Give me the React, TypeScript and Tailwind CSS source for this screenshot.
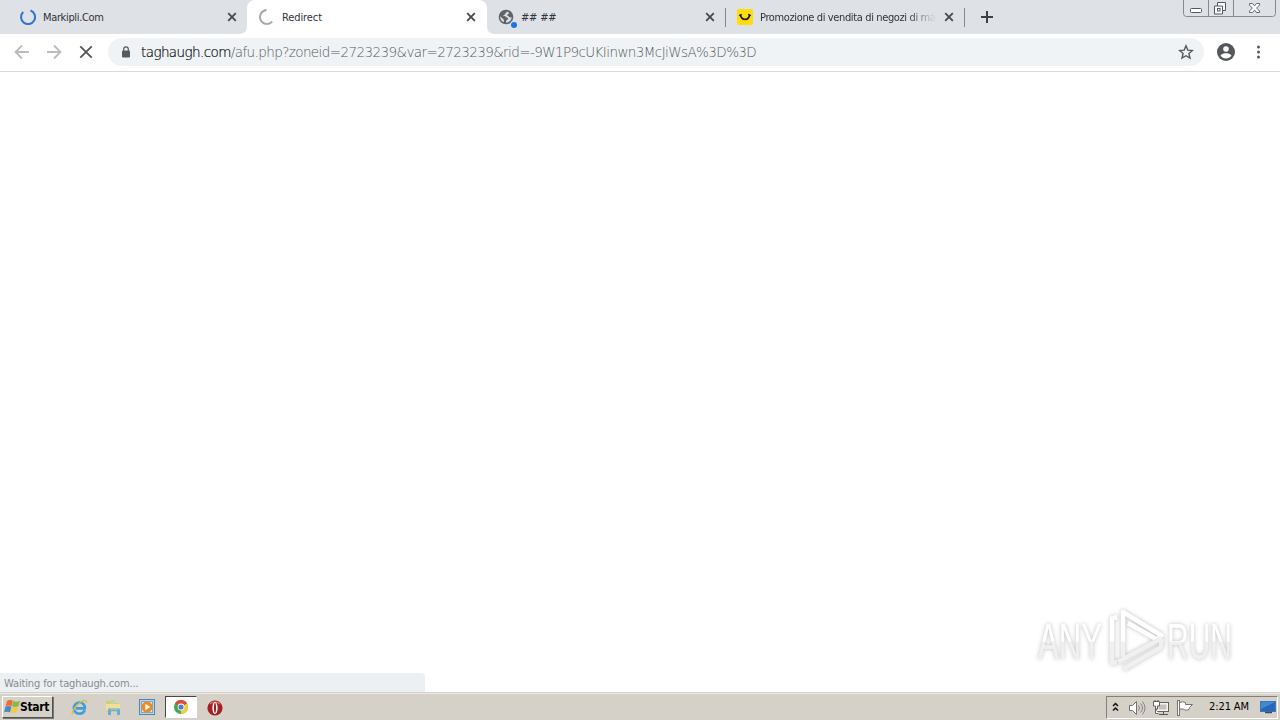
import React from 'react';
import clsx from 'clsx';

interface TabProps {
  title: string;
  icon: React.ReactNode;
  className: string;
  titleClass?: string;
}

const CloseIcon = () => (
  <svg width="10" height="10" viewBox="0 0 10 10" stroke="#45494e" strokeWidth="1.8">
    <path d="M1.2 1.2l7.6 7.6M8.8 1.2L1.2 8.8" />
  </svg>
);

const Tab = ({ title, icon, className, titleClass }: TabProps) => (
  <div className={clsx('relative flex h-[34px] shrink-0 items-center', className)}>
    <div className="h-4 w-4 shrink-0">{icon}</div>
    <div className={clsx('ml-[7px] flex-1 overflow-hidden whitespace-nowrap pt-px text-[11px] leading-[17px] text-[#303338]', titleClass)}>
      {title}
    </div>
    <div className="ml-2 shrink-0">
      <CloseIcon />
    </div>
  </div>
);

// Loading spinners
const BlueSpinner = () => (
  <svg width="16" height="16" viewBox="0 0 16 16" fill="none" stroke="#2f74d0" strokeWidth="2">
    <path d="M10.5 1.5A7 7 0 1 1 3.2 3" />
  </svg>
);

const GreySpinner = () => (
  <svg width="16" height="16" viewBox="0 0 16 16" fill="none" stroke="#a5a7aa" strokeWidth="1.9">
    <path d="M7.5 1A7 7 0 1 0 13.2 12.7" />
  </svg>
);

const GlobeIcon = () => (
  <svg width="20" height="20" viewBox="0 0 20 20">
    <circle cx="8" cy="8" r="7.3" fill="#5f6368" />
    <path d="M9.200 2.400C8.800 4 7 3.400 7 5.200c0 .8-1.800.5-1.700 1.500.1.900 2.500.1 2.900 1.200.4 1 1.900.4 2 1.500 0 1.300-1.800 1-2 2.300l-.3 2c3.300 0 5.800-2.500 5.800-5.700-.7.500-2 .7-2.600-.3-.5-.900-1.800-.5-1.900-1.600-.1-1 1.400-.8 1.700-1.700.2-.6-.7-1.700-1.700-2z" fill="#d9dce1" />
    <path d="M2.200 7.300l3.700 3.400v2.600a5.900 5.900 0 0 1-3.700-6z" fill="#d9dce1" />
    <circle cx="16" cy="16" r="4" fill="#dee1e6" />
    <circle cx="16" cy="16" r="3" fill="#1a73e8" />
  </svg>
);

const SmileIcon = () => (
  <svg width="16" height="16" viewBox="0 0 16 16">
    <rect width="16" height="16" rx="2" fill="#ffdc0a" />
    <path d="M3.5 5.800c.5 3 2.400 4.500 4.600 4.500s4-1.500 4.500-4.500" fill="none" stroke="#1d1a0e" strokeWidth="1.8" />
    <path d="M2 6.500l2.700-1.300M11.100 5.200l2.900 1.300" stroke="#1d1a0e" strokeWidth="1.2" />
  </svg>
);

const WindowButtons = () => (
  <svg className="absolute left-[1183px] top-0" width="93" height="17" viewBox="0 0 93 17" fill="none">
    <path d="M.5 0v13.5q0 3 3 3h86q3 0 3-3V0M25.5 0v16M50.5 0v16" stroke="#868991" />
    <rect x="7.5" y="8.5" width="11" height="4" rx="1" fill="#fff" stroke="#555960" />
    <path d="M34.5 2.5h8v8h-3v3.5h-8V6h3z" fill="#fff" stroke="#555960" />
    <path d="M34.5 6h5v4.5" stroke="#555960" />
    <rect x="34.5" y="8.5" width="2.5" height="2.5" stroke="#555960" />
    <path d="M66.5 3.5h3l2 2.4 2-2.4h3v1.6L73.6 8l2.9 3v1.5h-3l-2-2.4-2 2.4h-3V11l2.900-3-2.900-2.900z" fill="#fff" stroke="#666a71" />
  </svg>
);

const TabStrip = () => (
  <div className="relative flex h-[34px] bg-[#dee1e6]">
    <Tab title="Markipli.Com" icon={<BlueSpinner />} className="w-[247px] pl-5 pr-[10px]" titleClass="tracking-[-0.35px]" />
    <Tab
      title="Redirect"
      icon={<GreySpinner />}
      className="w-[240px] rounded-t-lg bg-white pl-3 pr-[11px]"
      titleClass="tracking-[-0.1px]"
    />
    <Tab title="## ##" icon={<GlobeIcon />} className="w-[239px] pl-[11px] pr-[11px]" titleClass="tracking-[-0.2px]" />
    <Tab
      title="Promozione di vendita di negozi di ma"
      icon={<SmileIcon />}
      className="w-[239px] pl-[11px] pr-[11px]"
      titleClass="tracking-[-0.37px] [mask-image:linear-gradient(to_right,#000_84%,transparent)]"
    />
    <div className="absolute left-[725px] top-[8px] h-[19px] w-px bg-[#85898f]" />
    <div className="absolute left-[964px] top-[8px] h-[19px] w-px bg-[#85898f]" />
    {/* bottom curves of the active tab */}
    <svg className="absolute left-[239px] top-[26px]" width="256" height="8" fill="#fff">
      <path d="M8 0v8H0q8 0 8-8zM248 0v8h8q-8 0-8-8z" />
    </svg>
    <svg className="ml-4 mt-[11px]" width="12" height="12" stroke="#3c4043" strokeWidth="2">
      <path d="M6 0v12M0 6h12" />
    </svg>
    <WindowButtons />
  </div>
);

const Toolbar = () => (
  <div className="flex h-[38px] items-center border-b border-[#d9dbde] bg-white pb-px pl-[14px]">
    <svg className="shrink-0" width="80" height="16" viewBox="0 0 80 16" fill="none" strokeWidth="1.8">
      <path d="M15 8H2M8 1.5L1.5 8 8 14.5M33 8h13M40 1.5L46.500 8 40 14.500" stroke="#babcbe" />
      <path d="M66.300 2.300l11.400 11.400M77.700 2.300L66.300 13.700" stroke="#505357" />
    </svg>
    <div className="ml-[14px] flex h-7 w-[1096px] shrink-0 items-center rounded-full bg-[#f0f3f5] pl-[14px] pr-[10px]">
      <svg width="8" height="12" viewBox="0 0 8 12">
        <rect y="4.500" width="8" height="7" rx="1" fill="#55595e" />
        <path d="M1.700 5V3.200a2.300 2.300 0 0 1 4.600 0V5" fill="none" stroke="#55595e" strokeWidth="1.200" />
      </svg>
      <div className="ml-[11px] flex-1 whitespace-nowrap font-['DejaVu_Sans_Light','DejaVu_Sans',sans-serif] text-[13.500px] font-extralight leading-5 tracking-[-0.590px] text-[#555a60]">
        <span className="text-black [-webkit-text-stroke:0.2px_#202124]">taghaugh.com</span>
        /afu.php?zoneid=2723239&amp;var=2723239&amp;rid=-9W1P9cUKIinwn3McJiWsA%3D%3D
      </div>
      <svg width="16" height="16" viewBox="0 0 16 16" fill="none" stroke="#55595e" strokeWidth="1.400">
        <path d="M8 1.800l1.800 4.300 4.600.4-3.500 3 1.100 4.600L8 11.700l-4 2.400 1.100-4.600-3.500-3 4.600-.4z" />
      </svg>
    </div>
    <svg className="ml-[13px] shrink-0" width="18" height="18" viewBox="0 0 18 18">
      <circle cx="9" cy="9" r="9" fill="#54585c" />
      <circle cx="9" cy="6" r="2.800" fill="#fff" />
      <path d="M3.500 12.500c1-1.700 3.500-2.200 5.500-2.200s4.500.5 5.500 2.200a6.600 6.600 0 0 1-11 0z" fill="#fff" />
    </svg>
    <svg className="ml-[21px] shrink-0" width="4" height="14" fill="#55595e">
      <circle cx="2.500" cy="2" r="1.500" />
      <circle cx="2.500" cy="7" r="1.500" />
      <circle cx="2.500" cy="12" r="1.500" />
    </svg>
  </div>
);

const Watermark = () => (
  <svg className="absolute left-[1020px] top-[600px] drop-shadow-[0_0_2px_rgba(0,0,0,0.26)]" width="240" height="84" viewBox="0 0 240 84">
    <defs>
      <linearGradient id="mark" gradientUnits="userSpaceOnUse" x1="0" y1="10" x2="0" y2="72">
        <stop offset=".5" stopColor="#fff" />
        <stop offset=".52" stopColor="#f0f0f0" />
      </linearGradient>
    </defs>
    <g fill="url(#mark)" className="font-['Liberation_Sans_Narrow','Liberation_Sans',sans-serif] text-[50px] tracking-normal">
      <text x="18" y="59" textLength="64" lengthAdjust="spacingAndGlyphs">ANY</text>
      <text x="147" y="59" textLength="65" lengthAdjust="spacingAndGlyphs">RUN</text>
    </g>
    <g fill="none" stroke="url(#mark)" strokeWidth="4.5" strokeLinejoin="round">
      <path d="M97 17l-5 1.500v44.500l5-1" />
      <path d="M103 57V12l38.500 23.500-4.500 4-29-16.500" />
      <path d="M98 62l44-24M103.500 69l37-21.500 1.500-9" stroke="#f0f0f0" />
    </g>
  </svg>
);

const StartFlag = () => (
  <svg width="17" height="16" viewBox="0 0 17 16">
    <path d="M3 2c2-1.500 4-1.300 5.900-.3L7.600 7c-2-.8-4-.8-6 .2z" fill="#ed6b36" />
    <path d="M9.300 1.900c2 1 4.300 1 6.700-.2l-1.500 5.500c-2 1-4.400.9-6.500.1z" fill="#88b84a" />
    <path d="M1.400 7.700c2-.9 4-.9 6.100.1L6 13.300c-2-.9-4-.8-5.800 0z" fill="#4689c9" />
    <path d="M7.900 7.900c2 .9 4.200.9 6.400.1L13 13.300c-2 .9-4.300.8-6.600-.1z" fill="#f6c845" />
  </svg>
);

const ExplorerE = () => (
  <svg width="17" height="17" viewBox="0 0 17 17" fill="none">
    <path d="M13.800 11.300c-1 2.300-2.800 3.400-5.300 3.400-3.400 0-5.600-2.300-5.600-5.400 0-3.400 2.400-5.800 5.600-5.800 3.500 0 5.500 2.400 5.300 5.900H5" stroke="#3c9fdc" strokeWidth="2.600" />
    <path d="M1.500 15.500C.2 12.500 6 4.800 11 2.300c3-1.500 5-1 4.500 1.500" stroke="#e0b944" strokeWidth="1.300" />
  </svg>
);

const FolderIcon = () => (
  <svg width="16" height="16" viewBox="0 0 16 16">
    <path d="M1 2h5l1 2h7v9H1z" fill="#e7c668" />
    <path d="M5 1h5v5H5z" fill="#b9d7a0" />
    <path d="M1 5h14v7H1z" fill="#f3df94" />
    <path d="M3 16v-5q0-2 2-2h7q3 0 3 2v5h-3v-4H6v4z" fill="#67aed0" />
    <path d="M5 10h8" stroke="#b4dcec" />
  </svg>
);

const PlayerIcon = () => (
  <svg width="16" height="16" viewBox="0 0 16 16">
    <rect x=".5" y=".5" width="15" height="15" fill="#b4d7ec" stroke="#4d87b6" />
    <rect x="2.500" y="2.500" width="11" height="11" fill="#d9e6ec" stroke="#7da7c5" />
    <circle cx="8" cy="8" r="5.500" fill="#ef8a20" />
    <path d="M6.300 4.700v6.600L11.300 8z" fill="#fff" />
  </svg>
);

const ChromeIcon = () => (
  <svg width="14" height="14" viewBox="0 0 14 14">
    <circle cx="7" cy="7" r="7" fill="#44a653" />
    <path d="M7 7L.9 3.500A7 7 0 0 1 13.100 3.500z" fill="#dd4a3c" />
    <path d="M7 7l6.100-3.500A7 7 0 0 1 7 14z" fill="#f5cb43" />
    <circle cx="7" cy="7" r="3.400" fill="#fff" />
    <circle cx="7" cy="7" r="2.600" fill="#4a80c4" />
  </svg>
);

const OperaIcon = () => (
  <svg width="16" height="16" viewBox="0 0 16 16">
    <circle cx="8" cy="8" r="7.600" fill="#a51f23" />
    <path d="M3 4a7 7 0 0 1 10 0" fill="none" stroke="#d86a6a" strokeWidth="1.500" />
    <ellipse cx="8" cy="8" rx="2.700" ry="5.900" fill="#f5efec" />
    <ellipse cx="8" cy="8" rx="1" ry="4.900" fill="#8c2525" />
  </svg>
);

const SystemTray = () => (
  <div className="ml-auto mr-[2px] mt-[2px] flex h-[23px] w-[172px] shrink-0 items-center border border-b-white border-l-[#85817a] border-r-white border-t-[#85817a]">
    <svg width="90" height="20" viewBox="0 0 90 20" fill="none">
      <path d="M6 8l2.500-2.500L11 8M6 12.500L8.500 10l2.500 2.500" stroke="#111" strokeWidth="1.500" />
      <path d="M22.500 7.500h3l4-4v13l-4-4h-3z" fill="#fff" stroke="#77746f" />
      <path d="M31.500 7.500q2 2.500 0 5M33.500 5.500q4 4.500 0 9M35.500 3.500q5 6.500 0 13" stroke="#88857f" />
      <rect x="49.500" y="4.500" width="12" height="9" fill="#f5f5f3" stroke="#66635e" />
      <rect x="51.500" y="6.500" width="8" height="5" fill="#c5c2bb" />
      <path d="M52 16.500h9M56.500 14v2" stroke="#55534f" />
      <path d="M46.500 3.500h6v4.500h-2v3h-2V8h-2zM48.500 11v4.500h3" fill="#fff" stroke="#66635e" />
      <path d="M48 2v2M51 2v2" stroke="#55534f" />
      <rect x="70.500" y="2.500" width="2" height="15" fill="#fff" stroke="#77746f" />
      <path d="M72.500 4.500q3-1.500 6 0v2h7l-3 3-1 2.500h-4l-1-1h-4z" fill="#fff" stroke="#77746f" />
    </svg>
    <div className="ml-3 w-[41px] whitespace-nowrap text-[11px] tracking-[-0.1px] text-black">2:21 AM</div>
    <svg className="ml-[10px] shrink-0" width="16" height="15" viewBox="0 0 16 15">
      <rect x=".5" y="1.500" width="15" height="10" fill="#2867b5" stroke="#3d77b8" />
      <path d="M1 2h14L1 9z" fill="#4289d0" />
      <path d="M5 12.500h7" stroke="#354d67" strokeWidth="1.500" />
    </svg>
  </div>
);

const Taskbar = () => (
  <div className="flex h-[27px] border-t border-[#eeeae4] bg-[#d5d0c8]">
    <div className="ml-[2px] mt-[2px] flex h-[22px] w-[51px] shrink-0 items-center border border-b-[#55524d] border-l-white border-r-[#55524d] border-t-white pl-[1px] shadow-[1px_1px_0_#777]">
      <StartFlag />
      <span className="ml-[-1px] font-['DejaVu_Sans_Condensed','DejaVu_Sans',sans-serif] text-[12px] font-bold tracking-[-0.35px] text-black">
        Start
      </span>
    </div>
    <div className="mt-[5px] flex h-4 items-center pl-[18px]">
      <ExplorerE />
      <div className="ml-[17px]"><FolderIcon /></div>
      <div className="ml-[18px]"><PlayerIcon /></div>
    </div>
    <div className="ml-[10px] mt-[2px] flex h-[22px] w-8 items-center justify-center border border-b-white border-l-[#484642] border-r-white border-t-[#484642] bg-white">
      <ChromeIcon />
    </div>
    <div className="ml-[10px] mt-[6px]"><OperaIcon /></div>
    <SystemTray />
  </div>
);

const App: React.FC = () => {
  return (
    <div className="relative flex h-[720px] w-[1280px] flex-col overflow-hidden bg-white font-['DejaVu_Sans_Condensed','DejaVu_Sans',sans-serif] tracking-[-0.4px]">
      <TabStrip />
      <Toolbar />
      <div className="flex flex-1 items-end border-b border-[#d5d0c8]">
        <div className="h-[19px] w-[425px] rounded-tr bg-[#edf0f3] pl-1 text-[11px] leading-[21px] tracking-[-0.13px] text-[#878b90]">
          Waiting for taghaugh.com...
        </div>
      </div>
      <Taskbar />
      <Watermark />
    </div>
  );
};

export default App;
